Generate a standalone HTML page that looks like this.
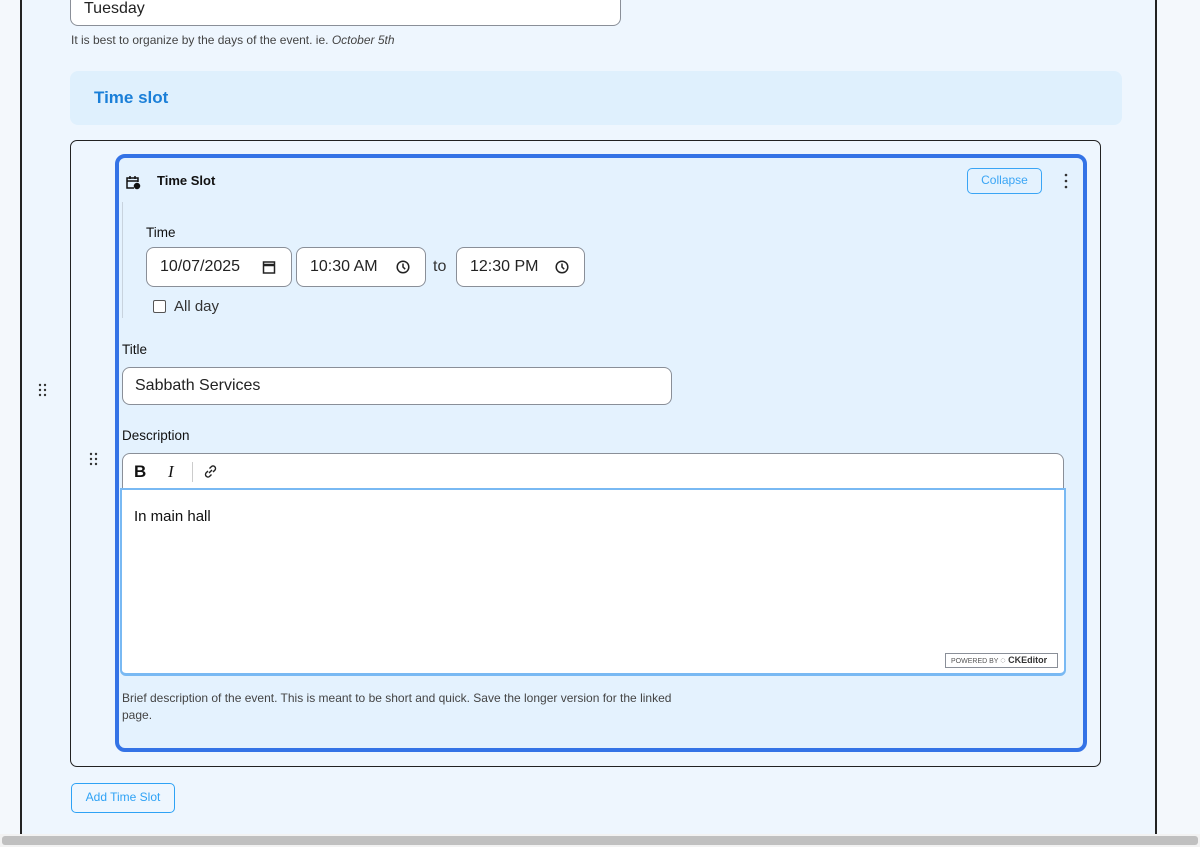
<!DOCTYPE html>
<html><head><meta charset="utf-8"><style>
*{box-sizing:border-box;margin:0;padding:0}
body{width:1200px;height:847px;overflow:hidden;background:#f4f8fc;font-family:"Liberation Sans",sans-serif;color:#111;position:relative}
.a{position:absolute}
.input{position:absolute;background:#fff;border:1px solid #8a8f98;border-radius:8px;font-size:16px;color:#222;display:flex;align-items:center}
.lbl{position:absolute;font-size:13.5px;color:#111}
</style></head><body>
<div class="a" style="left:20px;top:0;width:1137px;height:834px;background:#eef6fe;border-left:2px solid #222;border-right:2px solid #222"></div>
<div class="a" style="left:0;top:834px;width:1200px;height:13px;background:#f2f2f2"></div>
<div class="a" style="left:2px;top:836px;width:1196px;height:9px;background:#c0c0c0;border-radius:3px"></div>

<div class="input" style="left:70px;top:-12px;width:551px;height:38px;padding-left:13px;align-items:flex-end;padding-bottom:7px">Tuesday</div>
<div class="a" style="left:71px;top:33px;font-size:12px;color:#444">It is best to organize by the days of the event. ie. <i>October 5th</i></div>

<div class="a" style="left:70px;top:71px;width:1052px;height:54px;background:#dff0fd;border-radius:8px"></div>
<div class="a" style="left:94px;top:88px;font-size:17px;color:#1a7fd8;font-weight:bold">Time slot</div>

<div class="a" style="left:70px;top:140px;width:1031px;height:627px;border:1.5px solid #222;border-radius:7px"></div>
<div class="a" style="left:115px;top:154px;width:972px;height:598px;border:4px solid #3473e6;border-radius:10px;background:#e4f2fe"></div>

<svg class="a" style="left:37px;top:382px" width="12" height="16"><g fill="#333"><circle cx="3" cy="3" r="1.2"/><circle cx="8" cy="3" r="1.2"/><circle cx="3" cy="8" r="1.2"/><circle cx="8" cy="8" r="1.2"/><circle cx="3" cy="13" r="1.2"/><circle cx="8" cy="13" r="1.2"/></g></svg>
<svg class="a" style="left:88px;top:451px" width="12" height="16"><g fill="#333"><circle cx="3" cy="3" r="1.2"/><circle cx="8" cy="3" r="1.2"/><circle cx="3" cy="8" r="1.2"/><circle cx="8" cy="8" r="1.2"/><circle cx="3" cy="13" r="1.2"/><circle cx="8" cy="13" r="1.2"/></g></svg>

<svg class="a" style="left:125px;top:174px" width="16" height="16" viewBox="0 0 16 16" fill="none" stroke="#111" stroke-width="1.5"><path d="M9 14H2V4h11v4"/><path d="M2 7h11M5 2v3M10 2v3"/><circle cx="12" cy="12" r="2.5" fill="#111"/></svg>
<div class="a" style="left:157px;top:173px;font-size:13px;font-weight:bold">Time Slot</div>

<div class="a" style="left:967px;top:168px;width:75px;height:26px;border:1.5px solid #3aa5f5;border-radius:5px;color:#3aa5f5;font-size:12px;text-align:center;line-height:23px">Collapse</div>
<svg class="a" style="left:1062px;top:173px" width="8" height="16"><g fill="#333"><circle cx="4" cy="2" r="1.3"/><circle cx="4" cy="8" r="1.3"/><circle cx="4" cy="14" r="1.3"/></g></svg>

<div class="a" style="left:122px;top:202px;width:1px;height:116px;background:#c8d3de"></div>
<div class="lbl" style="left:146px;top:225px">Time</div>
<div class="input" style="left:146px;top:247px;width:146px;height:40px;padding-left:13px">10/07/2025
<svg class="a" style="right:15px;top:12px" width="14" height="14" viewBox="0 0 14 14" fill="none" stroke="#222" stroke-width="1.5"><rect x="1.5" y="2" width="11" height="11"/><path d="M1.5 5h11" stroke-width="2.5"/></svg></div>
<div class="input" style="left:296px;top:247px;width:130px;height:40px;padding-left:13px">10:30 AM
<svg class="a" style="right:15px;top:12px" width="14" height="14" viewBox="0 0 14 14" fill="none" stroke="#222" stroke-width="1.5"><circle cx="7" cy="7" r="5.8"/><path d="M7 3.5V7l2.2 2.2"/></svg></div>
<div class="a" style="left:433px;top:258px;font-size:16px;color:#333">to</div>
<div class="input" style="left:456px;top:247px;width:129px;height:40px;padding-left:13px">12:30 PM
<svg class="a" style="right:15px;top:12px" width="14" height="14" viewBox="0 0 14 14" fill="none" stroke="#222" stroke-width="1.5"><circle cx="7" cy="7" r="5.8"/><path d="M7 3.5V7l2.2 2.2"/></svg></div>
<div class="a" style="left:153px;top:300px;width:13px;height:13px;border:1px solid #555;border-radius:2px;background:#fff"></div>
<div class="a" style="left:174px;top:298px;font-size:15px;color:#333">All day</div>

<div class="lbl" style="left:122px;top:342px">Title</div>
<div class="input" style="left:122px;top:367px;width:550px;height:38px;padding-left:12px">Sabbath Services</div>

<div class="lbl" style="left:122px;top:428px">Description</div>
<div class="a" style="left:122px;top:453px;width:942px;height:38px;background:#fff;border:1px solid #8a8f98;border-bottom:none;border-radius:8px 8px 0 0"></div>
<div class="a" style="left:134px;top:462px;font-size:17px;font-weight:bold">B</div>
<div class="a" style="left:168px;top:462px;font-size:17px;font-style:italic;font-family:'Liberation Serif',serif">I</div>
<div class="a" style="left:192px;top:462px;width:1px;height:20px;background:#ccc"></div>
<svg class="a" style="left:203px;top:464px" width="15" height="15" viewBox="0 0 15 15" fill="none" stroke="#222" stroke-width="1.4"><path d="M6 9l3-3"/><path d="M5 7L3 9a2.5 2.5 0 003.5 3.5L8.5 10.5"/><path d="M10 8l2-2A2.5 2.5 0 008.5 2.5L6.5 4.5"/></svg>
<div class="a" style="left:120px;top:488px;width:946px;height:188px;background:#fff;border:2px solid #79b9f3;border-bottom-width:3px;border-radius:0 0 6px 6px"></div>
<div class="a" style="left:134px;top:508px;font-size:15px">In main hall</div>
<div class="a" style="left:945px;top:653px;width:113px;height:15px;border:1px solid #8a8f98;background:#fff;font-size:7px;color:#555;line-height:13px;padding-left:5px">POWERED BY <b style="font-size:9px;color:#333">◌ CKEditor</b></div>
<div class="a" style="left:122px;top:690px;width:580px;font-size:12px;color:#444;line-height:17px">Brief description of the event. This is meant to be short and quick. Save the longer version for the linked page.</div>

<div class="a" style="left:71px;top:783px;width:104px;height:30px;border:1.5px solid #2ea2f5;border-radius:5px;color:#2ea2f5;font-size:12px;text-align:center;line-height:27px;background:#eef6fe">Add Time Slot</div>
</body></html>
